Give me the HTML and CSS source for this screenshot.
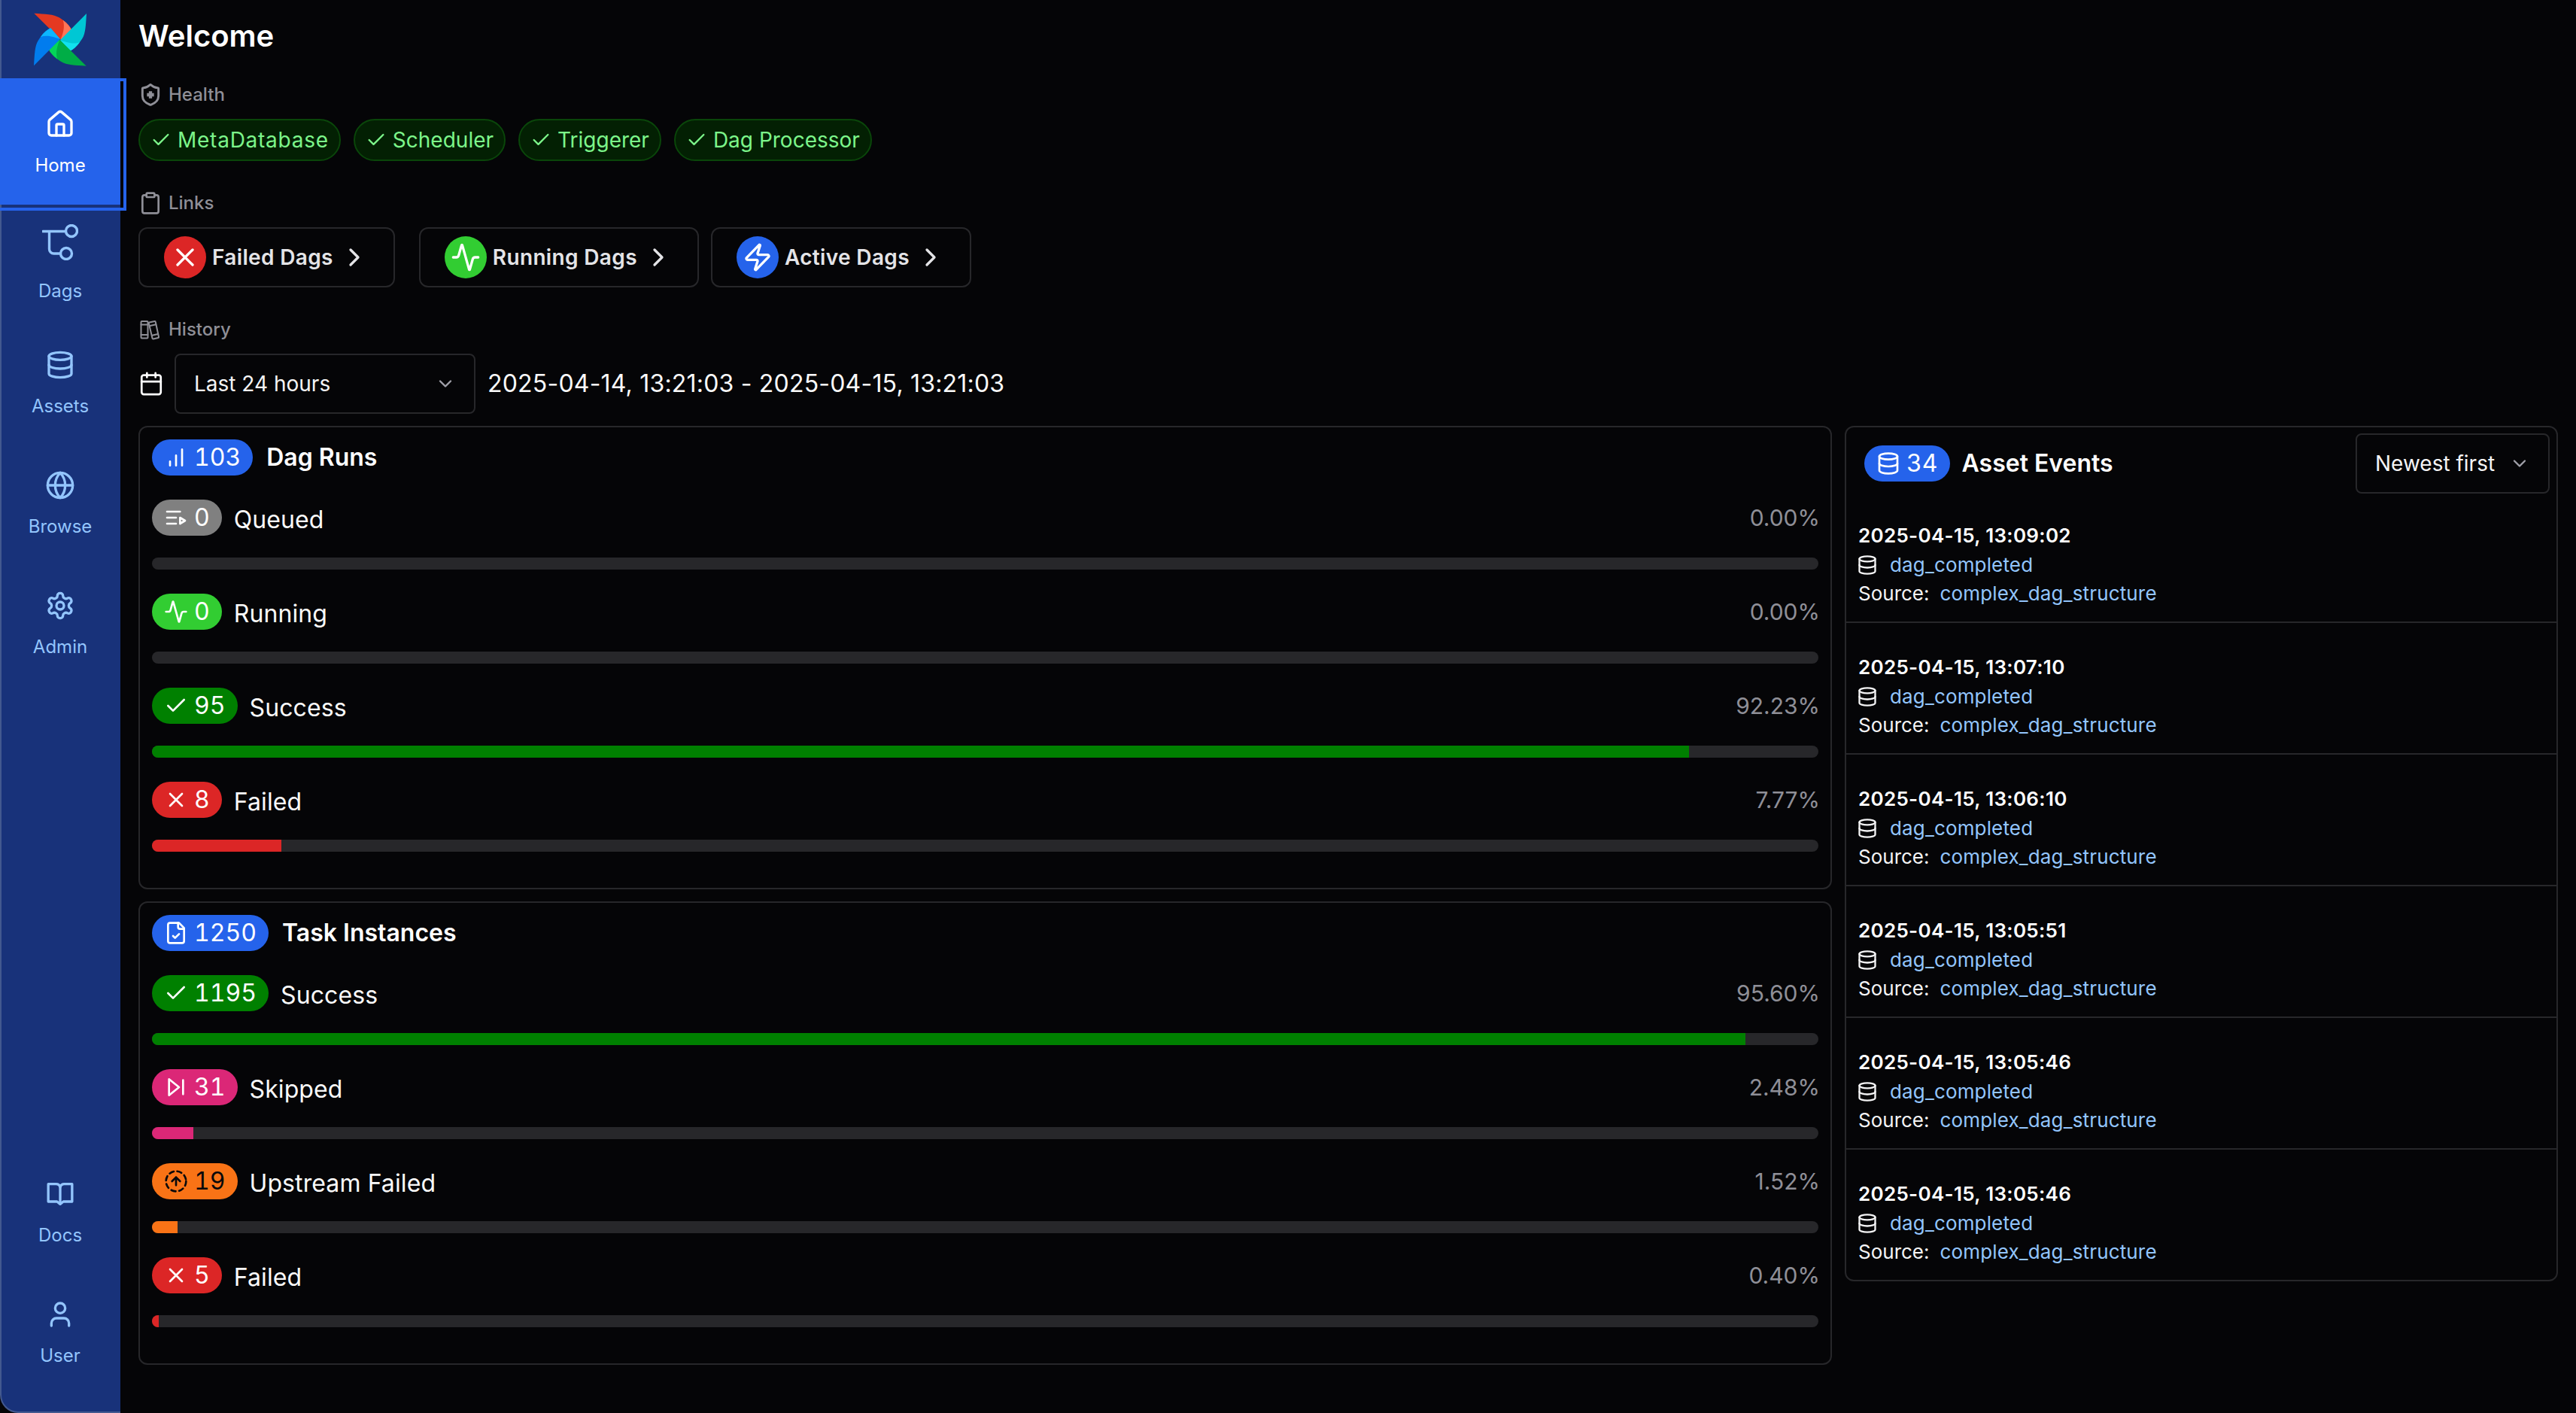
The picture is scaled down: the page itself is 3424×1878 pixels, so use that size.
FILE: index.html
```html
<!DOCTYPE html>
<html lang="en">
<head>
<meta charset="utf-8">
<title>Airflow</title>
<link rel="stylesheet" href="styles.css">
</head>
<body>
<svg class="sprite" xmlns="http://www.w3.org/2000/svg">
  <symbol id="i-home" viewBox="0 0 24 24"><path d="M15 21v-8a1 1 0 0 0-1-1h-4a1 1 0 0 0-1 1v8"/><path d="M3 10a2 2 0 0 1 .709-1.528l7-5.999a2 2 0 0 1 2.582 0l7 5.999A2 2 0 0 1 21 10v9a2 2 0 0 1-2 2H5a2 2 0 0 1-2-2z"/></symbol>
  <symbol id="i-dag" viewBox="0 0 48 48"><circle cx="39" cy="9" r="7.5"/><circle cx="32" cy="39" r="7.5"/><path d="M1 9.5h30M9.5 9.5V33a6 6 0 0 0 6 6h9"/></symbol>
  <symbol id="i-db" viewBox="0 0 24 24"><ellipse cx="12" cy="5" rx="9" ry="3"/><path d="M3 5v14a9 3 0 0 0 18 0V5"/><path d="M3 12a9 3 0 0 0 18 0"/></symbol>
  <symbol id="i-globe" viewBox="0 0 24 24"><circle cx="12" cy="12" r="10"/><path d="M12 2a14.5 14.5 0 0 0 0 20 14.5 14.5 0 0 0 0-20"/><path d="M2 12h20"/></symbol>
  <symbol id="i-gear" viewBox="0 0 24 24"><path d="M12.22 2h-.44a2 2 0 0 0-2 2v.18a2 2 0 0 1-1 1.73l-.43.25a2 2 0 0 1-2 0l-.15-.08a2 2 0 0 0-2.73.73l-.22.38a2 2 0 0 0 .73 2.73l.15.1a2 2 0 0 1 1 1.72v.51a2 2 0 0 1-1 1.74l-.15.09a2 2 0 0 0-.73 2.73l.22.38a2 2 0 0 0 2.73.73l.15-.08a2 2 0 0 1 2 0l.43.25a2 2 0 0 1 1 1.73V20a2 2 0 0 0 2 2h.44a2 2 0 0 0 2-2v-.18a2 2 0 0 1 1-1.73l.43-.25a2 2 0 0 1 2 0l.15.08a2 2 0 0 0 2.73-.73l.22-.39a2 2 0 0 0-.73-2.73l-.15-.08a2 2 0 0 1-1-1.74v-.5a2 2 0 0 1 1-1.74l.15-.09a2 2 0 0 0 .73-2.73l-.22-.38a2 2 0 0 0-2.73-.73l-.15.08a2 2 0 0 1-2 0l-.43-.25a2 2 0 0 1-1-1.73V4a2 2 0 0 0-2-2z"/><circle cx="12" cy="12" r="3"/></symbol>
  <symbol id="i-book" viewBox="0 0 24 24"><path d="M2.5 4h6A3.5 3.5 0 0 1 12 6.5 3.5 3.5 0 0 1 15.500 4h6v14h-7L12 20l-2.500-2h-7z"/><path d="M12 6.500V18"/></symbol>
  <symbol id="i-user" viewBox="0 0 24 24"><path d="M19 21v-2a4 4 0 0 0-4-4H9a4 4 0 0 0-4 4v2"/><circle cx="12" cy="7" r="4"/></symbol>
  <symbol id="i-shield" viewBox="0 0 24 24"><path d="M20 13c0 5-3.500 7.500-7.660 8.950a1 1 0 0 1-.67-.01C7.500 20.500 4 18 4 13V6a1 1 0 0 1 1-1c2 0 4.500-1.200 6.240-2.720a1.170 1.170 0 0 1 1.520 0C14.510 3.810 17 5 19 5a1 1 0 0 1 1 1z"/><path class="plus" d="M8.500 12h7M12 8.500v7"/></symbol>
  <symbol id="i-clip" viewBox="0 0 24 24"><rect x="8" y="2" width="8" height="4" rx="1"/><path d="M16 4h2a2 2 0 0 1 2 2v14a2 2 0 0 1-2 2H6a2 2 0 0 1-2-2V6a2 2 0 0 1 2-2h2"/></symbol>
  <symbol id="i-lib" viewBox="0 0 32 32"><rect x="3.500" y="5" width="9" height="22.500" rx="1"/><path d="M3.500 9.500h9M3.500 23h9"/><path d="M14.500 6.500 21.500 5a1 1 0 0 1 1.200.8l4.300 20a1 1 0 0 1-.8 1.200l-6.500 1.400a1 1 0 0 1-1.200-.8L13.800 7.700a1 1 0 0 1 .7-1.200z"/><path d="M15.500 11 23.300 9.300M18.200 23.700 26 22"/></symbol>
  <symbol id="i-cal" viewBox="0 0 24 24"><path d="M8 2v4M16 2v4"/><rect x="3" y="4" width="18" height="18" rx="2"/><path d="M3 10h18"/></symbol>
  <symbol id="i-check" viewBox="0 0 24 24"><path d="M20 6 9 17l-5-5"/></symbol>
  <symbol id="i-x" viewBox="0 0 24 24"><path d="M18 6 6 18M6 6l12 12"/></symbol>
  <symbol id="i-pulse" viewBox="0 0 24 24"><path d="M22 12h-2.480a2 2 0 0 0-1.930 1.460l-2.350 8.360a.25.25 0 0 1-.48 0L9.240 2.180a.25.25 0 0 0-.48 0l-2.350 8.360A2 2 0 0 1 4.490 12H2"/></symbol>
  <symbol id="i-zap" viewBox="0 0 24 24"><path d="M4 14a1 1 0 0 1-.78-1.630l9.900-10.200a.5.5 0 0 1 .86.460l-1.920 6.020A1 1 0 0 0 13 10h7a1 1 0 0 1 .78 1.630l-9.900 10.200a.5.5 0 0 1-.86-.46l1.920-6.020A1 1 0 0 0 11 14z"/></symbol>
  <symbol id="i-right" viewBox="0 0 24 24"><path d="m9 18 6-6-6-6"/></symbol>
  <symbol id="i-down" viewBox="0 0 24 24"><path d="m6 9 6 6 6-6"/></symbol>
  <symbol id="i-bars" viewBox="0 0 24 24"><path d="M12 20V10M18 20V4M6 20v-4"/></symbol>
  <symbol id="i-queue" viewBox="0 0 24 24"><path d="M12 12H3M16 6H3M12 18H3M16 12l5 3-5 3v-6Z"/></symbol>
  <symbol id="i-file" viewBox="0 0 24 24"><path d="M15 2H6a2 2 0 0 0-2 2v16a2 2 0 0 0 2 2h12a2 2 0 0 0 2-2V7Z"/><path d="M14 2v4a2 2 0 0 0 2 2h4"/><path d="m9 15 2 2 4-4"/></symbol>
  <symbol id="i-skip" viewBox="0 0 24 24"><path d="M5 4l10 8-10 8zM19 5v14"/></symbol>
  <symbol id="i-up" viewBox="0 0 24 24"><circle cx="12" cy="12" r="10" stroke-dasharray="4.500 3.500"/><path d="m16 12-4-4-4 4M12 16V8"/></symbol>
</svg>

<div class="shell">
  <nav class="sidebar">
    <div class="logo">
      <svg class="pinwheel" viewBox="130 50 222 222" xmlns="http://www.w3.org/2000/svg">
        <g><path class="red" d="M137 55C180 58 215 58 237 72c25 16 43 33 50 50l-44 38z"/><path class="red-l" d="M252 82c18 13 30 28 35 40l-44 38c7-20 19-50 9-78z"/></g>
        <g transform="rotate(90 241 160)"><path class="cyan" d="M137 55C180 58 215 58 237 72c25 16 43 33 50 50l-44 38z"/><path class="cyan-l" d="M252 82c18 13 30 28 35 40l-44 38c7-20 19-50 9-78z"/></g>
        <g transform="rotate(180 241 160)"><path class="green" d="M137 55C180 58 215 58 237 72c25 16 43 33 50 50l-44 38z"/><path class="green-l" d="M252 82c18 13 30 28 35 40l-44 38c7-20 19-50 9-78z"/></g>
        <g transform="rotate(270 241 160)"><path class="blue" d="M137 55C180 58 215 58 237 72c25 16 43 33 50 50l-44 38z"/><path class="blue-l" d="M252 82c18 13 30 28 35 40l-44 38c7-20 19-50 9-78z"/></g>
      </svg>
    </div>
    <a class="nav-item is-active"><svg class="nav-icon"><use href="#i-home"/></svg><span>Home</span></a>
    <a class="nav-item"><svg class="nav-icon nav-icon-dag"><use href="#i-dag"/></svg><span>Dags</span></a>
    <a class="nav-item"><svg class="nav-icon"><use href="#i-db"/></svg><span>Assets</span></a>
    <a class="nav-item"><svg class="nav-icon"><use href="#i-globe"/></svg><span>Browse</span></a>
    <a class="nav-item"><svg class="nav-icon"><use href="#i-gear"/></svg><span>Admin</span></a>
    <div class="nav-spacer"></div>
    <a class="nav-item"><svg class="nav-icon"><use href="#i-book"/></svg><span>Docs</span></a>
    <a class="nav-item"><svg class="nav-icon"><use href="#i-user"/></svg><span>User</span></a>
  </nav>

  <main class="main">
    <h1 class="title">Welcome</h1>

    <section class="section">
      <h2 class="section-head"><svg class="head-icon head-icon-shield"><use href="#i-shield"/></svg>Health</h2>
      <div class="chips">
        <span class="chip chip-meta"><svg class="chip-icon"><use href="#i-check"/></svg>MetaDatabase</span>
        <span class="chip"><svg class="chip-icon"><use href="#i-check"/></svg>Scheduler</span>
        <span class="chip"><svg class="chip-icon"><use href="#i-check"/></svg>Triggerer</span>
        <span class="chip"><svg class="chip-icon"><use href="#i-check"/></svg>Dag Processor</span>
      </div>
    </section>

    <section class="section">
      <h2 class="section-head"><svg class="head-icon"><use href="#i-clip"/></svg>Links</h2>
      <div class="links">
        <a class="link-btn link-btn-first"><span class="dot c-failed"><svg class="dot-icon"><use href="#i-x"/></svg></span>Failed Dags<svg class="link-chevron"><use href="#i-right"/></svg></a>
        <a class="link-btn"><span class="dot c-running"><svg class="dot-icon"><use href="#i-pulse"/></svg></span>Running Dags<svg class="link-chevron"><use href="#i-right"/></svg></a>
        <a class="link-btn"><span class="dot c-blue"><svg class="dot-icon"><use href="#i-zap"/></svg></span>Active Dags<svg class="link-chevron"><use href="#i-right"/></svg></a>
      </div>
    </section>

    <section class="section">
      <h2 class="section-head"><svg class="head-icon"><use href="#i-lib"/></svg>History</h2>
      <div class="range">
        <svg class="cal-icon"><use href="#i-cal"/></svg>
        <div class="select select-range"><span>Last 24 hours</span><svg class="select-chevron"><use href="#i-down"/></svg></div>
        <span class="range-text">2025-04-14, 13:21:03 - 2025-04-15, 13:21:03</span>
      </div>
    </section>

    <div class="grid">
      <div class="col">
        <section class="panel">
          <header class="panel-head"><span class="badge c-blue"><svg class="badge-icon"><use href="#i-bars"/></svg>103</span><h3 class="panel-title">Dag Runs</h3></header>
          <div class="stats">
            <div class="stat"><div class="stat-head"><div class="stat-left"><span class="badge c-queued"><svg class="badge-icon"><use href="#i-queue"/></svg>0</span><span class="stat-label">Queued</span></div><span class="stat-pct">0.00%</span></div><div class="track"></div></div>
            <div class="stat"><div class="stat-head"><div class="stat-left"><span class="badge c-running"><svg class="badge-icon"><use href="#i-pulse"/></svg>0</span><span class="stat-label">Running</span></div><span class="stat-pct">0.00%</span></div><div class="track"></div></div>
            <div class="stat"><div class="stat-head"><div class="stat-left"><span class="badge c-success"><svg class="badge-icon"><use href="#i-check"/></svg>95</span><span class="stat-label">Success</span></div><span class="stat-pct">92.23%</span></div><div class="track"><div class="fill c-success" style="width:92.23%"></div></div></div>
            <div class="stat"><div class="stat-head"><div class="stat-left"><span class="badge c-failed"><svg class="badge-icon"><use href="#i-x"/></svg>8</span><span class="stat-label">Failed</span></div><span class="stat-pct">7.77%</span></div><div class="track"><div class="fill c-failed" style="width:7.77%"></div></div></div>
          </div>
        </section>
        <section class="panel">
          <header class="panel-head"><span class="badge c-blue"><svg class="badge-icon"><use href="#i-file"/></svg>1250</span><h3 class="panel-title">Task Instances</h3></header>
          <div class="stats">
            <div class="stat"><div class="stat-head"><div class="stat-left"><span class="badge c-success"><svg class="badge-icon"><use href="#i-check"/></svg>1195</span><span class="stat-label">Success</span></div><span class="stat-pct">95.60%</span></div><div class="track"><div class="fill c-success" style="width:95.6%"></div></div></div>
            <div class="stat"><div class="stat-head"><div class="stat-left"><span class="badge c-skipped"><svg class="badge-icon"><use href="#i-skip"/></svg>31</span><span class="stat-label">Skipped</span></div><span class="stat-pct">2.48%</span></div><div class="track"><div class="fill c-skipped" style="width:2.48%"></div></div></div>
            <div class="stat"><div class="stat-head"><div class="stat-left"><span class="badge c-upstream"><svg class="badge-icon"><use href="#i-up"/></svg>19</span><span class="stat-label">Upstream Failed</span></div><span class="stat-pct">1.52%</span></div><div class="track"><div class="fill c-upstream" style="width:1.52%"></div></div></div>
            <div class="stat"><div class="stat-head"><div class="stat-left"><span class="badge c-failed"><svg class="badge-icon"><use href="#i-x"/></svg>5</span><span class="stat-label">Failed</span></div><span class="stat-pct">0.40%</span></div><div class="track"><div class="fill c-failed" style="width:0.4%"></div></div></div>
          </div>
        </section>
      </div>

      <aside class="events">
        <header class="events-head">
          <div class="events-title"><span class="badge c-blue"><svg class="badge-icon"><use href="#i-db"/></svg>34</span><h3 class="panel-title">Asset Events</h3></div>
          <div class="select select-sort"><span>Newest first</span><svg class="select-chevron"><use href="#i-down"/></svg></div>
        </header>
        <article class="event"><div class="event-date">2025-04-15, 13:09:02</div><div class="event-line"><svg class="event-icon"><use href="#i-db"/></svg><a class="event-link">dag_completed</a></div><div class="event-line event-source">Source: <a class="event-link">complex_dag_structure</a></div></article>
        <article class="event"><div class="event-date">2025-04-15, 13:07:10</div><div class="event-line"><svg class="event-icon"><use href="#i-db"/></svg><a class="event-link">dag_completed</a></div><div class="event-line event-source">Source: <a class="event-link">complex_dag_structure</a></div></article>
        <article class="event"><div class="event-date">2025-04-15, 13:06:10</div><div class="event-line"><svg class="event-icon"><use href="#i-db"/></svg><a class="event-link">dag_completed</a></div><div class="event-line event-source">Source: <a class="event-link">complex_dag_structure</a></div></article>
        <article class="event"><div class="event-date">2025-04-15, 13:05:51</div><div class="event-line"><svg class="event-icon"><use href="#i-db"/></svg><a class="event-link">dag_completed</a></div><div class="event-line event-source">Source: <a class="event-link">complex_dag_structure</a></div></article>
        <article class="event"><div class="event-date">2025-04-15, 13:05:46</div><div class="event-line"><svg class="event-icon"><use href="#i-db"/></svg><a class="event-link">dag_completed</a></div><div class="event-line event-source">Source: <a class="event-link">complex_dag_structure</a></div></article>
        <article class="event"><div class="event-date">2025-04-15, 13:05:46</div><div class="event-line"><svg class="event-icon"><use href="#i-db"/></svg><a class="event-link">dag_completed</a></div><div class="event-line event-source">Source: <a class="event-link">complex_dag_structure</a></div></article>
      </aside>
    </div>
  </main>
</div>
</body>
</html>
```

FILE: styles.css
```css
* { box-sizing: border-box; }
html, body { margin: 0; padding: 0; }
body {
  width: 3424px;
  height: 1878px;
  overflow: hidden;
  background: #050507;
  color: #fafafa;
  font-family: Inter, "Liberation Sans", sans-serif;
  font-size: 28px;
  line-height: 40px;
}
svg { display: block; flex: none; fill: none; stroke: currentColor; stroke-width: 2; stroke-linecap: round; stroke-linejoin: round; }
.sprite { display: none; }
.shell { display: flex; height: 1878px; }

/* sidebar */
.sidebar {
  width: 160px;
  flex: none;
  display: flex;
  flex-direction: column;
  padding-bottom: 22px;
  background: #18327a;
  border-left: 2px solid #43598f;
  border-bottom: 2px solid #43598f;
  border-bottom-left-radius: 24px;
  color: #93c5fd;
}
.logo { height: 112px; flex: none; display: flex; align-items: center; justify-content: center; padding-bottom: 6px; margin-left: -2px; }
.pinwheel { width: 74px; height: 74px; stroke: none; }
.red { fill: #e43921; } .red-l { fill: #ff7557; }
.cyan { fill: #00c7d4; } .cyan-l { fill: #11e1ee; }
.green { fill: #00ad46; } .green-l { fill: #04d659; }
.blue { fill: #017cee; } .blue-l { fill: #0cb6ff; }
.nav-item {
  position: relative;
  height: 160px;
  flex: none;
  margin-left: -2px;
  display: flex;
  flex-direction: column;
  align-items: center;
  justify-content: center;
  gap: 21px;
  padding-bottom: 6px;
  font-size: 24px;
  line-height: 28px;
}
.nav-icon { width: 40px; height: 40px; }
.nav-icon-dag { width: 48px; height: 48px; stroke-width: 3.4; margin-bottom: 6px; }
.is-active { background: #2563eb; color: #fff; box-shadow: 0 -8px 0 #2563eb; }
.is-active::after {
  content: "";
  position: absolute;
  inset: -8px -8px -8px -4px;
  border: 4px solid #2563eb;
}
.nav-spacer { flex: 1; }

/* main */
.main { flex: 1; min-width: 0; padding: 24px 24px 0; }
.title { margin: 0 0 -2px; font-size: 40px; line-height: 48px; font-weight: 600; color: #fff; }
.section { margin-top: 40px; }
.section-head {
  display: flex;
  align-items: center;
  gap: 8px;
  margin: 0 0 16px;
  font-size: 24px;
  line-height: 32px;
  font-weight: 500;
  color: #8f8f97;
}
.head-icon { width: 32px; height: 32px; stroke-width: 2; }
.head-icon-shield { stroke-width: 2.2; }
.plus { stroke-width: 3.2; stroke-linecap: butt; }
.chips { display: flex; gap: 17px; }
.chip {
  display: flex;
  align-items: center;
  gap: 8px;
  height: 56px;
  padding: 0 14px;
  border: 2px solid #0a460a;
  border-radius: 28px;
  background: #032003;
  color: #7cf58a;
}
.chip-meta { letter-spacing: .75px; }
.chip-icon { width: 28px; height: 28px; }

.links { display: flex; gap: 16px; }
.link-btn {
  display: flex;
  align-items: center;
  height: 80px;
  padding: 0 32px;
  border: 2px solid #27272a;
  border-radius: 12px;
  font-weight: 600;
  letter-spacing: .35px;
  color: #e4e4e7;
}
.link-btn-first { margin-right: 16px; }
.dot { width: 56px; height: 56px; margin-right: 8px; border-radius: 50%; display: flex; align-items: center; justify-content: center; color: #fff; }
.dot-icon { width: 40px; height: 40px; }
.link-chevron { width: 40px; height: 40px; margin-left: 8px; }

.range { display: flex; align-items: center; }
.cal-icon { width: 34px; height: 34px; stroke-width: 1.9; color: #fff; }
.select {
  display: flex;
  align-items: center;
  justify-content: space-between;
  height: 80px;
  padding: 0 24px;
  border: 2px solid #27272a;
  border-radius: 8px;
  color: #f4f4f5;
}
.select-range { width: 400px; margin-left: 14px; }
.select-sort { width: 258px; flex: none; }
.select-chevron { width: 28px; height: 28px; color: #a1a1aa; }
.range-text { margin-left: 16px; font-size: 32px; line-height: 40px; letter-spacing: .2px; color: #fafafa; }

.grid { display: grid; grid-template-columns: 2251px 1fr; gap: 17px; align-items: start; margin-top: 16px; }
.col { display: flex; flex-direction: column; gap: 16px; }
.panel { padding: 16px 16px 48px; border: 2px solid #27272a; border-radius: 12px; }
.panel-head { display: flex; align-items: center; gap: 18px; margin-bottom: 32px; }
.panel-title { margin: 0; font-size: 32px; line-height: 40px; font-weight: 600; color: #fff; }
.badge {
  display: inline-flex;
  align-items: center;
  gap: 8px;
  height: 48px;
  padding: 0 16px;
  border-radius: 24px;
  font-size: 32px;
  line-height: 40px;
  font-variant-numeric: tabular-nums;
  color: #fff;
}
.badge-icon { width: 32px; height: 32px; }
.c-blue { background: #2563eb; }
.c-queued { background: #808080; }
.c-running { background: #32cd32; }
.c-success { background: #008000; }
.c-failed { background: #dc2626; }
.c-skipped { background: #db2777; }
.c-upstream { background: #f97316; }
.badge.c-upstream { color: #09090b; }

.stats { display: flex; flex-direction: column; gap: 32px; }
.stat-head { display: flex; align-items: center; justify-content: space-between; margin-bottom: 29px; }
.stat-left { display: flex; align-items: center; gap: 16px; }
.stat-label { height: 48px; font-size: 32px; line-height: 48px; padding-top: 3px; letter-spacing: .1px; }
.stat-pct { margin-right: -2px; font-size: 30px; line-height: 48px; color: #8f8f97; }
.track { height: 16px; border-radius: 8px; background: #27272a; overflow: hidden; }
.fill { height: 100%; }

/* events */
.events { border: 2px solid #27272a; border-radius: 12px; }
.events-head { display: flex; align-items: center; justify-content: space-between; height: 87px; margin-bottom: -2px; padding: 8px 9px 0 24px; }
.events-title { display: flex; align-items: center; gap: 16px; }
.event { padding: 39px 16px 18px; border-bottom: 2px solid #27272a; font-size: 26px; }
.event:last-child { border-bottom: 0; }
.event-date { font-weight: 600; line-height: 40px; letter-spacing: .3px; color: #fff; }
.event-line { display: flex; align-items: center; gap: 16px; line-height: 38px; color: #f4f4f5; }
.event-source { gap: 14px; }
.event-icon { width: 28px; height: 28px; margin-left: -2px; }
.event-link { letter-spacing: .15px; color: #93c5fd; }
```
